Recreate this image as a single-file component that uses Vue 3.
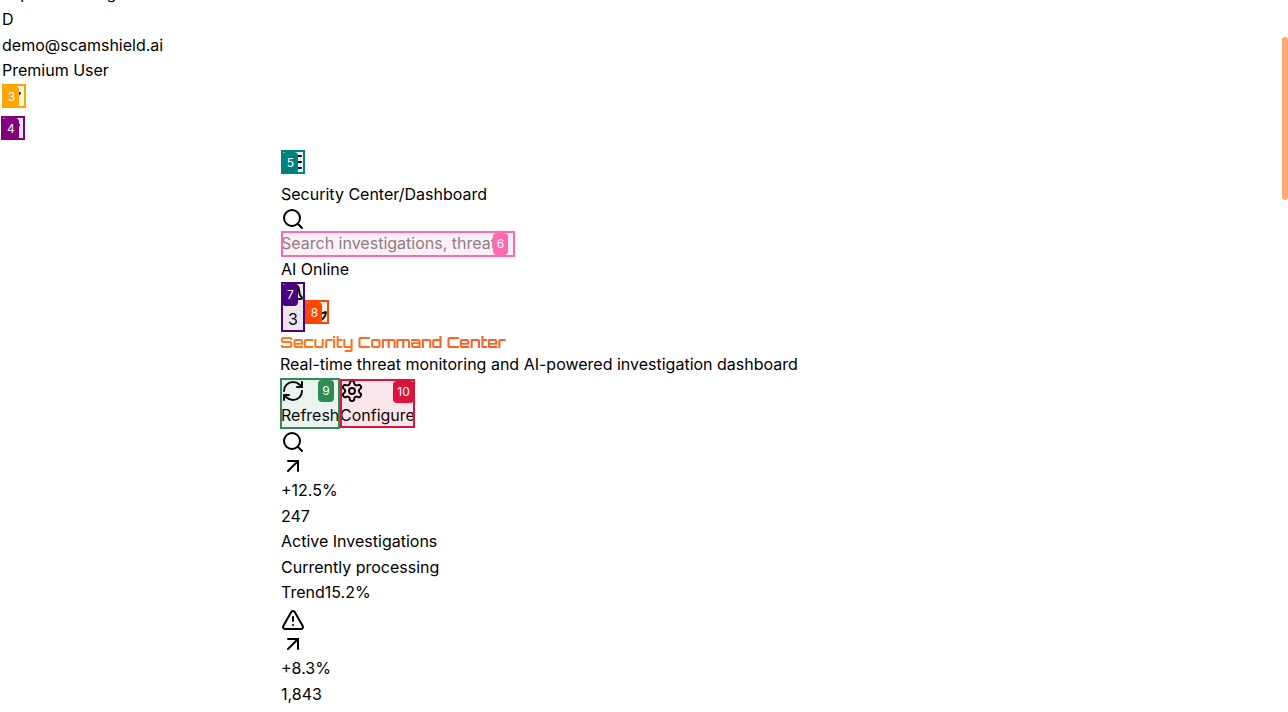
<script setup>
const icons = {
  search: ['M21 21l-4.3-4.3', 'M19 11a8 8 0 1 1-16 0 8 8 0 0 1 16 0'],
  arrow: ['M7 7h10v10', 'M7 17 17 7'],
  alert: ['m21.73 18-8-14a2 2 0 0 0-3.48 0l-8 14A2 2 0 0 0 4 21h16a2 2 0 0 0 1.73-3', 'M12 9v4', 'M12 17h.01'],
  refresh: ['M3 12a9 9 0 0 1 9-9 9.75 9.75 0 0 1 6.74 2.74L21 8', 'M21 3v5h-5', 'M21 12a9 9 0 0 1-9 9 9.75 9.75 0 0 1-6.74-2.74L3 16', 'M8 16H3v5'],
  settings: ['M12.22 2h-.44a2 2 0 0 0-2 2v.18a2 2 0 0 1-1 1.73l-.43.25a2 2 0 0 1-2 0l-.15-.08a2 2 0 0 0-2.73.73l-.22.38a2 2 0 0 0 .73 2.73l.15.1a2 2 0 0 1 1 1.72v.51a2 2 0 0 1-1 1.74l-.15.09a2 2 0 0 0-.73 2.73l.22.38a2 2 0 0 0 2.73.73l.15-.08a2 2 0 0 1 2 0l.43.25a2 2 0 0 1 1 1.73V20a2 2 0 0 0 2 2h.44a2 2 0 0 0 2-2v-.18a2 2 0 0 1 1-1.73l.43-.25a2 2 0 0 1 2 0l.15.08a2 2 0 0 0 2.73-.73l.22-.39a2 2 0 0 0-.73-2.73l-.15-.08a2 2 0 0 1-1-1.74v-.5a2 2 0 0 1 1-1.74l.15-.09a2 2 0 0 0 .73-2.73l-.22-.38a2 2 0 0 0-2.73-.73l-.15.08a2 2 0 0 1-2 0l-.43-.25a2 2 0 0 1-1-1.73V4a2 2 0 0 0-2-2z', 'M15 12a3 3 0 1 1-6 0 3 3 0 0 1 6 0'],
  bell: ['M3.262 15.326A1 1 0 0 0 4 17h16a1 1 0 0 0 .74-1.673C19.41 13.956 18 12.499 18 8A6 6 0 0 0 6 8c0 4.499-1.411 5.956-2.738 7.326', 'M10.3 21a1.94 1.94 0 0 0 3.4 0'],
  moon: ['M20.985 12.486a9 9 0 1 1-9.473-9.472c.405-.022.617.46.402.803a6 6 0 0 0 8.268 8.268c.344-.215.825-.004.803.401'],
  menu: ['M4 6h16', 'M4 12h16', 'M4 18h16'],
  chevron: ['m6 9 6 6 6-6']
}
const stats = [
  { icon: 'search', change: '+12.5%', value: '247', lines: ['Active Investigations', 'Currently processing', 'Trend15.2%'] },
  { icon: 'alert', change: '+8.3%', value: '1,843', lines: [] }
]
</script>

<template>
  <div class="page">
    <aside class="side">
      <div class="line clipped">Expert Training</div>
      <div class="line">D</div>
      <div class="line">demo@scamshield.ai</div>
      <div class="line">Premium User</div>
      <button class="mark orange"><svg viewBox="0 0 24 24"><path v-for="d in icons.chevron" :key="d" :d="d" /></svg><b>3</b></button>
      <button class="mark purple"><svg viewBox="0 0 24 24"><path v-for="d in icons.chevron" :key="d" :d="d" /></svg><b>4</b></button>
    </aside>
    <main class="content">
      <button class="mark teal"><svg viewBox="0 0 24 24"><path v-for="d in icons.menu" :key="d" :d="d" /></svg><b>5</b></button>
      <div class="line crumbs">Security Center/Dashboard</div>
      <svg viewBox="0 0 24 24"><path v-for="d in icons.search" :key="d" :d="d" /></svg>
      <div class="mark pink"><span class="hint">Search investigations, threats...</span><b>6</b></div>
      <div class="line">AI Online</div>
      <div class="tools">
        <button class="mark indigo"><svg viewBox="0 0 24 24"><path v-for="d in icons.bell" :key="d" :d="d" /></svg><span>3</span><b>7</b></button>
        <button class="mark red"><svg viewBox="0 0 24 24"><path v-for="d in icons.moon" :key="d" :d="d" /></svg><b>8</b></button>
      </div>
      <h1><span>Security Command Center</span></h1>
      <div class="line intro">Real-time threat monitoring and AI-powered investigation dashboard</div>
      <div class="actions">
        <button class="mark green"><svg viewBox="0 0 24 24"><path v-for="d in icons.refresh" :key="d" :d="d" /></svg><span>Refresh</span><b>9</b></button>
        <button class="mark crimson"><svg viewBox="0 0 24 24"><path v-for="d in icons.settings" :key="d" :d="d" /></svg><span>Configure</span><b>10</b></button>
      </div>
      <section v-for="s in stats" :key="s.value" class="stat">
        <svg viewBox="0 0 24 24"><path v-for="d in icons[s.icon]" :key="d" :d="d" /></svg>
        <svg viewBox="0 0 24 24"><path v-for="d in icons.arrow" :key="d" :d="d" /></svg>
        <div class="line">{{ s.change }}</div>
        <div class="line">{{ s.value }}</div>
        <div v-for="l in s.lines" :key="l" class="line">{{ l }}</div>
      </section>
    </main>
    <div class="thumb"></div>
  </div>
</template>

<style>
html, body { overflow: hidden; background: #fff; }
</style>
<style scoped>
.page { position: relative; display: flow-root; width: 1288px; height: 712px; overflow: hidden; font: 16px/25.6px Inter, sans-serif; color: #000; }
.side { display: flow-root; height: 150px; padding-left: 2px; box-sizing: border-box; }
.line { height: 25.6px; white-space: nowrap; }
.clipped { margin-top: -18.7px; }
svg { display: block; width: 24px; height: 24px; fill: none; stroke: currentColor; stroke-width: 2; stroke-linecap: round; stroke-linejoin: round; }
.content { padding-left: 281px; }
.mark { position: relative; display: block; box-sizing: border-box; width: 24px; height: 24px; margin: 0; padding: 0; border: 0; background: none; font: inherit; color: #000; }
.mark::after { content: ''; position: absolute; inset: 0; border: 2px solid var(--c); background: color-mix(in srgb, var(--c) 10%, transparent); }
.mark b { position: absolute; z-index: 1; box-sizing: border-box; top: 2px; left: 1px; width: 16px; height: 22px; padding-left: 1px; border-radius: 4px; background: var(--c); color: #fff; font-size: 12px; font-weight: 400; line-height: 22px; text-align: center; }
.mark > span { display: block; white-space: nowrap; }
.orange { --c: #ffa500; margin-top: 0.3px; }
.purple { --c: #800080; margin: 8px 0 0 -1px; }
.mark.purple b { width: 17px; }
.teal { --c: #008080; }
.crumbs { height: 25px; margin-top: 8px; }
.pink { --c: #ff69b4; width: 234px; height: 26px; margin-top: -0.4px; }
.pink .hint { width: 214px; overflow: hidden; color: #808080; line-height: 25px; }
.mark.pink b { left: 212px; width: 15px; padding: 0; }
.tools { display: flex; align-items: flex-end; height: 50px; }
.indigo { --c: #4b0082; height: 50px; text-align: center; }
.indigo > span { padding-top: 0.6px; }
.red { --c: #ff4500; margin-bottom: 8px; }
h1 { height: 20px; margin: 0 0 0 -1px; font: 700 16px/20px Orbitron, "DejaVu Sans", sans-serif; letter-spacing: -0.025em; }
h1 span { display: inline-block; white-space: nowrap; color: transparent; background: linear-gradient(90deg, #ff7a1a, #fb5a32); background-clip: text; }
.intro { margin-left: -1px; }
.actions { display: flex; height: 52.2px; margin-left: -1px; }
.green { --c: #2e8b57; width: 60px; height: 51px; }
.crimson { --c: #dc143c; width: 75px; height: 49px; margin-top: 1px; }
.green svg { margin: 1px 0 0 1px; }
.green > span { padding-left: 1px; text-align: left; }
.crimson > span { text-align: left; }
.mark.green b { left: 38px; padding: 0; }
.mark.crimson b { left: 53px; width: 21px; padding: 0; }
.stat { height: 178px; }
.thumb { position: absolute; right: 0; top: 37px; width: 6px; height: 163px; border-radius: 3px; background: #fdaa73; }
</style>
